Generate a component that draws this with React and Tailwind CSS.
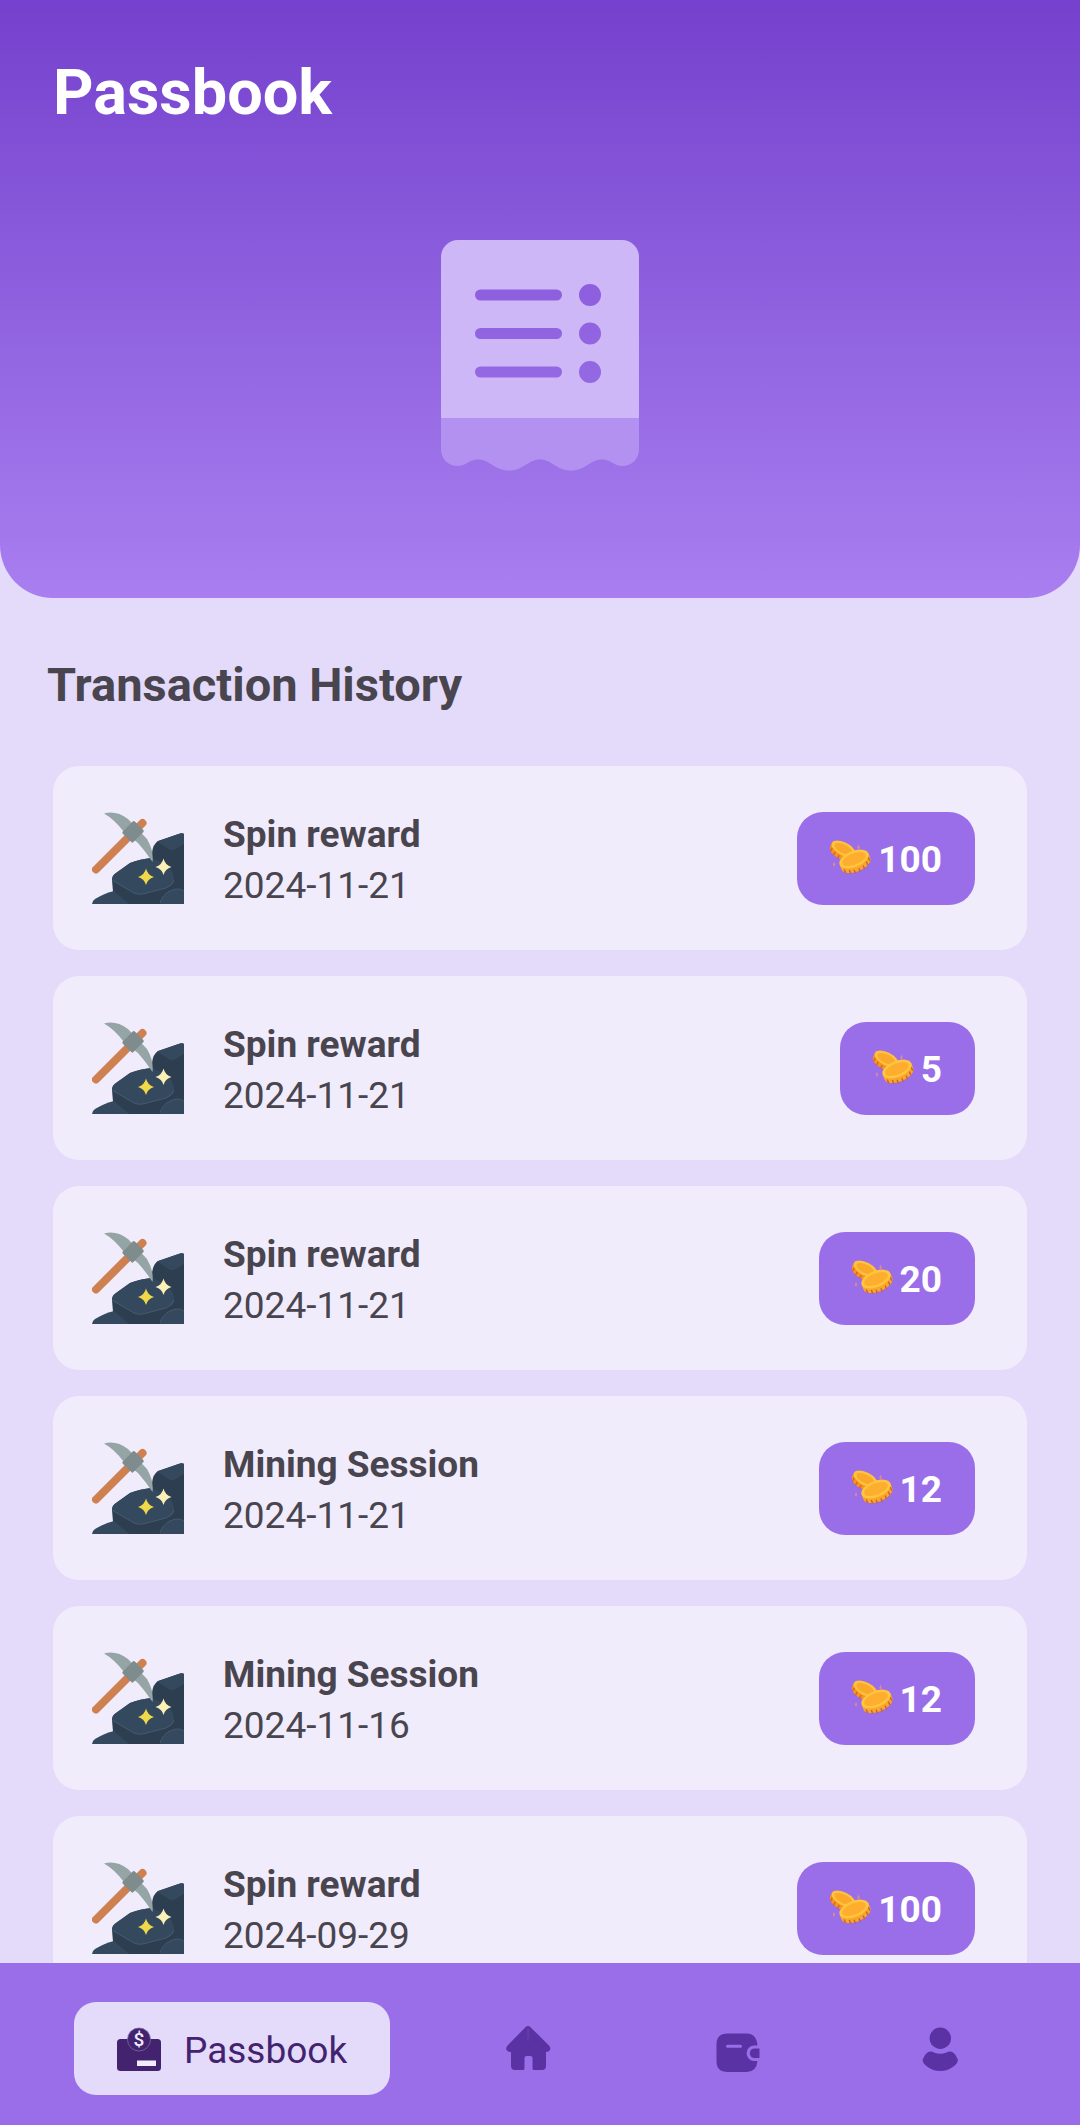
const transactions = [
  { id: 1, title: "Spin reward", date: "2024-11-21", amount: 100 },
  { id: 2, title: "Spin reward", date: "2024-11-21", amount: 5 },
  { id: 3, title: "Spin reward", date: "2024-11-21", amount: 20 },
  { id: 4, title: "Mining Session", date: "2024-11-21", amount: 12 },
  { id: 5, title: "Mining Session", date: "2024-11-16", amount: 12 },
  { id: 6, title: "Spin reward", date: "2024-09-29", amount: 100 },
];

function ReceiptIcon() {
  return (
    <svg viewBox="0 0 198 232" className="w-[198px] h-[232px]" aria-hidden="true">
      {/* Paper, with the lines and dots cut out */}
      <path
        fill="#cdb7f6"
        fillRule="evenodd"
        d="M0 178V17A17 17 0 0 1 17 0H181A17 17 0 0 1 198 17V178Z
           M39.500 49.500a5.500 5.500 0 0 0 0 11h76a5.500 5.500 0 0 0 0-11z
           M39.500 88a5.500 5.500 0 0 0 0 11h76a5.500 5.500 0 0 0 0-11z
           M39.500 126.500a5.500 5.500 0 0 0 0 11h76a5.500 5.500 0 0 0 0-11z
           M138 55a11 11 0 1 0 22 0a11 11 0 1 0-22 0z
           M138 93.500a11 11 0 1 0 22 0a11 11 0 1 0-22 0z
           M138 132a11 11 0 1 0 22 0a11 11 0 1 0-22 0z"
      />
      {/* Torn edge */}
      <path
        fill="#b391f0"
        d="M0 178H198V209C198 219 191 226 181 226C173 226 170 219.500 161 219.500C149 219.500 145 230.500 130 230.500C115 230.500 111 219.500 99 219.500C87 219.500 83 230.500 68 230.500C53 230.500 49 219.500 37 219.500C28 219.500 25 226 17 226C7 226 0 219 0 209Z"
      />
    </svg>
  );
}

function MiningIcon() {
  return (
    <svg viewBox="0 0 92 92" className="w-[92px] h-[92px] shrink-0" aria-hidden="true">
      <path d="M60 60V41Q61 32 66 29L88 21.500Q91 21 92 22V92H60Z" fill="#2c3e50" />
      <path d="M65 29.500L88 21.500Q91 21 92 22V32L83 37.500Q80 39 77 37.500Z" fill="#34495e" />
      <path d="M20 68Q20 63 24 61L38 51Q48 47 60 46L76 54Q83 62 83 70V92H36L21 80Z" fill="#2c3e50" />
      <path d="M20 67Q21 63 24 61L38 51Q48 47 60 46L76 53Q83 62 82 70Q80 74 74 76L51 82Q46 83 42 81L22 70Z" fill="#34495e" />
      <path d="M20 68L42 81Q46 83 51 82L74 76Q81 73 82 68" fill="none" stroke="#4b6073" strokeWidth="0.8" />
      <path d="M0 92Q0 89 3 87Q13 81 22 79L37 92Z" fill="#34495e" />
      <path d="M68 92Q70 83 78 79Q86 75 92 79V92Z" fill="#34495e" />
      <path d="M68 91Q70 83 78 79Q86 75 92 79" fill="none" stroke="#4b6073" strokeWidth="0.8" />
      <path d="M4 57.500L50.500 11" stroke="#cf8051" strokeWidth="8" strokeLinecap="round" />
      <path d="M12 1.500Q24-2 36 7L55 27Q62 39 60.500 50Q54 40 46 31L32 20Q22 7 12 1.500Z" fill="#95a5a5" />
      <rect x="33.500" y="11.500" width="15" height="17" rx="1.500" transform="rotate(45 41.200 20)" fill="#7f8c8d" />
      <path d="M54 56.500Q55.500 63 62 65Q55.500 67 54 73Q52.500 67 46 65Q52.500 63 54 56.500Z" fill="#f0d84b" />
      <path d="M71.500 46.500Q73 53 79.500 55Q73 57 71.500 63Q70 57 63.500 55Q70 53 71.500 46.500Z" fill="#fbf0b5" />
    </svg>
  );
}

function CoinsIcon() {
  return (
    <svg viewBox="0 0 42 42" className="w-[42px] h-[42px]" aria-hidden="true">
      <g transform="rotate(27 14 11)">
        <path d="M1 12V16A13 6.500 0 0 0 27 16V12Z" fill="#f7941f" />
        <path d="M3.500 16v4M8 18.500v4M13 19.500v4" stroke="#d4692a" strokeWidth="1.500" />
        <ellipse cx="14" cy="12" rx="13" ry="6.500" fill="#ffc23c" />
        <ellipse cx="14" cy="12" rx="10" ry="4.300" fill="#fba92b" />
      </g>
      <g transform="rotate(-22 24 22)">
        <path d="M8.500 22V27A15.500 8 0 0 0 39.500 27V22Z" fill="#fba62a" />
        <path d="M11 28v4M15.500 30.500v4M20 32v4M25 32.500v4M30 31.500v4M34.500 29v4M38 25.500v4" stroke="#c9672d" strokeWidth="1.500" />
        <ellipse cx="24" cy="22" rx="15.500" ry="8" fill="#ffc53f" />
        <ellipse cx="24" cy="22" rx="12.500" ry="5.700" fill="#fdae2e" />
      </g>
      <path d="M28.500 7.500l1.200 3-1.200 3-1.200-3zM4 25l1.200 2.500L4 30l-1.200-2.500z" fill="#e08a8f" />
    </svg>
  );
}

function PassbookIcon() {
  return (
    <svg viewBox="0 0 44 44" className="w-11 h-11" aria-hidden="true">
      <rect y="12" width="44" height="32" rx="3.500" fill="#43236f" />
      <circle cx="22" cy="12.500" r="11.500" fill="#43236f" stroke="#7f67a6" strokeWidth="0.800" />
      <path d="M20 33.500H39V39H20Z" fill="#f1ecfc" />
      <text x="22" y="19" textAnchor="middle" className="text-[19px] font-medium" fill="#f1ecfc">$</text>
    </svg>
  );
}

function HomeIcon() {
  return (
    <svg viewBox="1 0 44 44" className="w-11 h-11 overflow-visible" fill="#5a32a3" aria-hidden="true">
      <path d="M19.500 0.200Q22-2.300 24.500 0.200L43 18.500Q45 21 44 23Q43 25 40 25V39Q40 43 36 43H28Q26.500 43 26.500 41.500V31Q26.500 29 24.500 29H20.500Q18.500 29 18.500 31V41.500Q18.500 43 17 43H9Q5 43 5 39V25Q1.500 25 0.500 23Q-0.500 21 1.500 18.500Z" />
      <path d="M22 1.500V14" stroke="#6f49b9" strokeWidth="0.800" />
    </svg>
  );
}

function WalletIcon() {
  return (
    <svg viewBox="-3 1 44 44" className="w-11 h-11 overflow-visible" fill="#5a32a3" aria-hidden="true">
      <path d="M11.500 7.500H30.500Q40.500 7.500 41.500 19.500H37.500A7.800 7.800 0 0 0 37.500 35H41.500Q40.500 46 30.500 46H11.500Q0.500 46 0.500 35V18.500Q0.500 7.500 11.500 7.500Z" />
      <path d="M43.500 22.500H38A4.800 4.800 0 0 0 38 32H43.500Z" />
      <path d="M11.500 20.300H24.500" stroke="#9a6ee9" strokeWidth="3" strokeLinecap="round" />
    </svg>
  );
}

function UserIcon() {
  return (
    <svg viewBox="0 0 44 44" className="w-11 h-11" fill="#5a32a3" aria-hidden="true">
      <circle cx="22.300" cy="11.300" r="10.700" />
      <path d="M12 24.500Q14.500 24.500 16.500 25.700Q22.300 28 28 25.700Q30 24.500 32.500 24.500Q37 25 40 33Q39.500 37 34 40.500Q29 44 22.300 44Q15.500 44 10.500 40.500Q5 37 4.500 33Q7.500 25 12 24.500Z" />
    </svg>
  );
}

function TransactionCard({ title, date, amount }) {
  return (
    <li className="flex items-center h-[184px] pl-[39px] pr-[52px] rounded-[26px] bg-[#f1ecfc]">
      <MiningIcon />
      <div className="flex-1 pl-[39px] pt-1 text-[37px] leading-[51px] text-[#49454f]">
        <h3 className="font-bold">{title}</h3>
        <p>{date}</p>
      </div>
      <div className="flex items-center gap-1.5 h-[93px] px-[33px] rounded-[26px] bg-[#9a6ee9]">
        <CoinsIcon />
        <span className="pt-1 text-[37px] font-bold text-white">{amount}</span>
      </div>
    </li>
  );
}

export default function App() {
  return (
    <div className="flex flex-col h-screen bg-[#e4daf9] font-[Roboto,sans-serif]">
      <main className="flex-1 min-h-0 overflow-y-auto [scrollbar-width:none]">
        <header className="px-[53px] pt-14 pb-[126px] rounded-b-[53px] bg-linear-to-b from-[#7540cd] to-[#a97ef0]">
          <h1 className="text-[63px] leading-[74px] font-bold text-white">Passbook</h1>
          <div className="flex justify-center mt-[110px]">
            <ReceiptIcon />
          </div>
        </header>

        {/* Transaction list */}
        <section className="pt-[59px] pb-[26px]">
          <h2 className="px-[47px] text-[47px] leading-[55px] font-bold text-[#49454f]">
            Transaction History
          </h2>
          <ul className="flex flex-col gap-[26px] mt-[54px] px-[53px]">
            {transactions.map((t) => (
              <TransactionCard key={t.id} title={t.title} date={t.date} amount={t.amount} />
            ))}
          </ul>
        </section>
      </main>

      {/* Bottom navigation */}
      <nav className="flex items-center justify-between shrink-0 px-[74px] pt-[39px] pb-[30px] bg-[#9a6ee9]">
        <a href="#passbook" aria-current="page" className="flex items-center gap-[23px] h-[93px] px-[43px] rounded-[22px] bg-[#e4daf9]">
          <PassbookIcon />
          <span className="pt-1 text-[37px] text-[#43236f]">Passbook</span>
        </a>
        <a href="#home" aria-label="Home" className="px-11">
          <HomeIcon />
        </a>
        <a href="#wallet" aria-label="Wallet" className="px-11">
          <WalletIcon />
        </a>
        <a href="#profile" aria-label="Profile" className="px-11">
          <UserIcon />
        </a>
      </nav>
    </div>
  );
}
